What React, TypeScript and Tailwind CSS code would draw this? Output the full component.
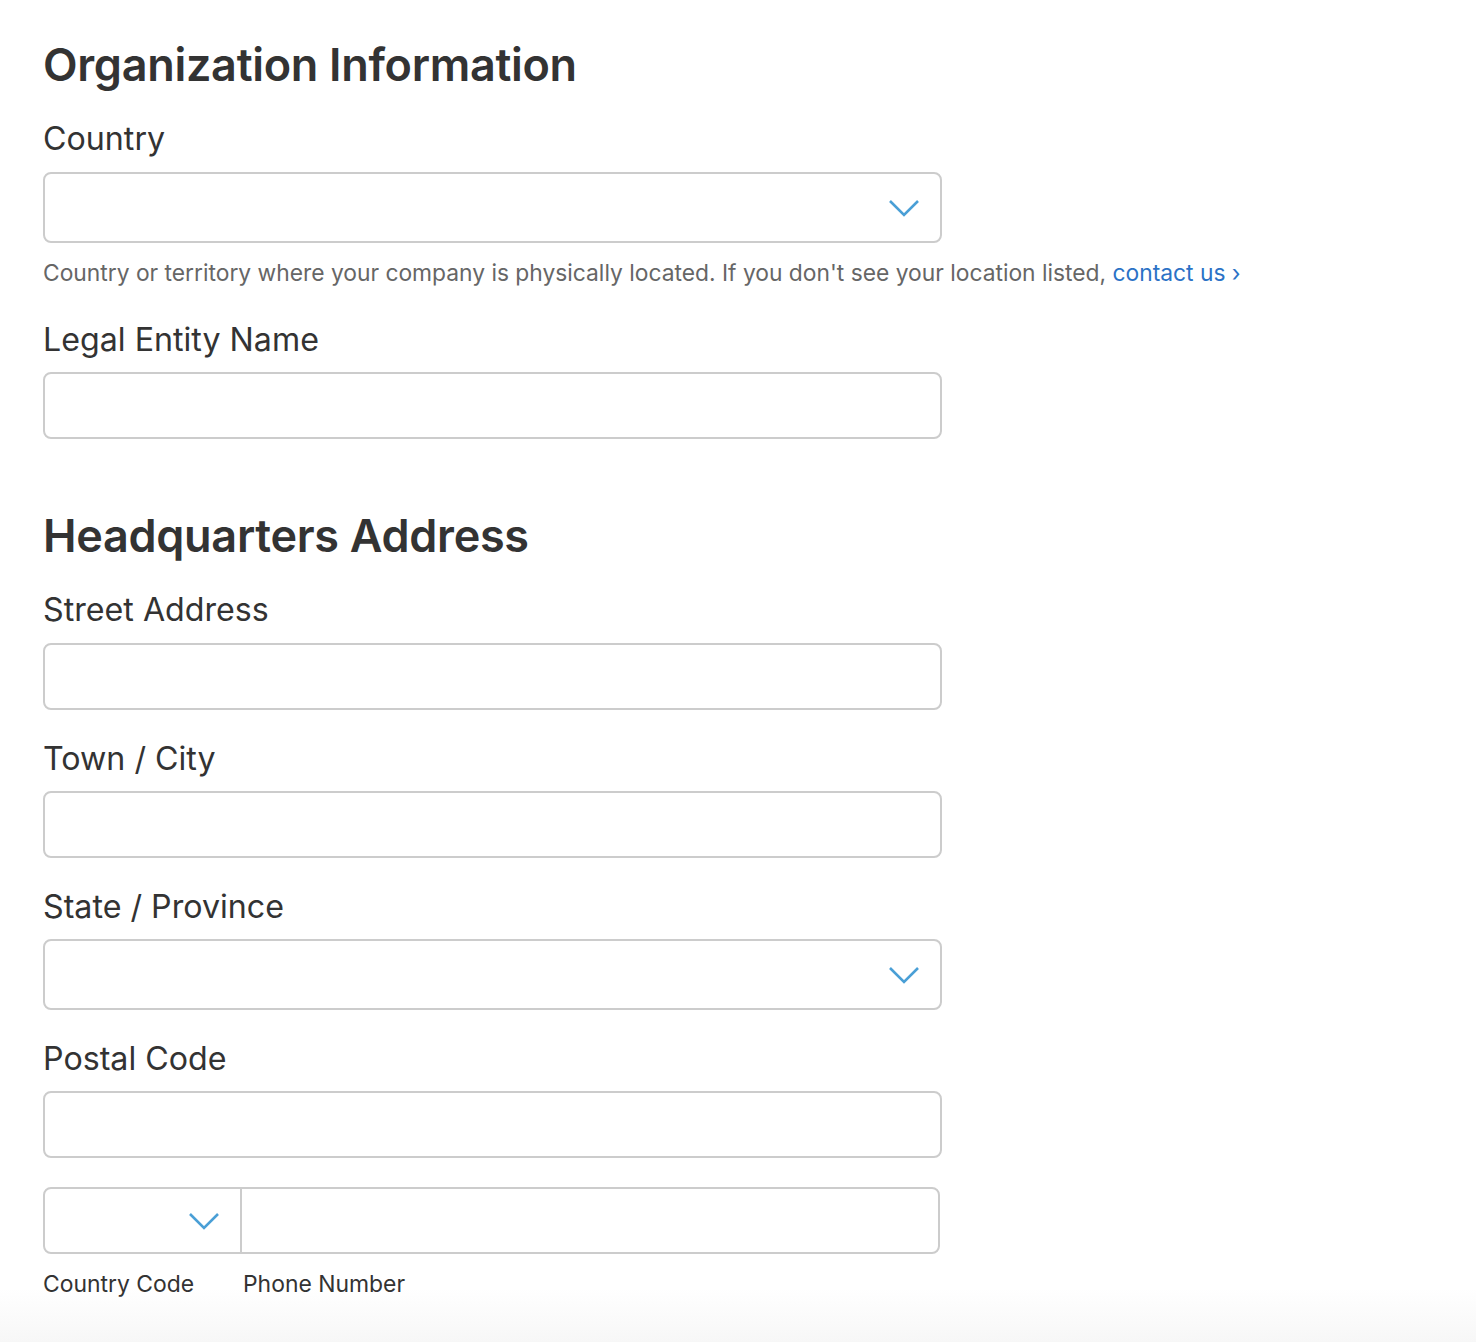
import React from "react";

const Chevron = ({ className = "" }: { className?: string }) => (
  <svg width="32" height="18" viewBox="0 0 32 18" className={className} fill="none">
    <path d="M2 2 L16 16 L30 2" stroke="#4a9fd6" strokeWidth="2.6" strokeLinecap="butt" strokeLinejoin="miter" />
  </svg>
);

const Label = ({ children }: { children: React.ReactNode }) => (
  <div className="h-[34px] flex items-center text-[32.2px] leading-none text-[#333333]">{children}</div>
);

const TextInput = () => (
  <div className="h-[67px] w-[899px] rounded-[8px] border-2 border-[#cccccc] bg-white" />
);

const Select = () => (
  <div className="h-[71px] w-[899px] rounded-[8px] border-2 border-[#cccccc] bg-white flex items-center justify-end pr-[20px]">
    <Chevron />
  </div>
);

export default function App() {
  return (
    <div
      className="w-[1476px] h-[1342px] bg-gradient-to-b from-white from-[96%] to-[#f7f7f7] text-[#333333]"
      style={{ fontFamily: "Inter, 'Noto Sans', sans-serif" }}
    >
      <div className="pl-[43px] pt-[40px]">
        <h1 className="h-[48px] flex items-center text-[45px] font-semibold leading-none tracking-[-0.3px]">Organization Information</h1>
        <div className="mt-[34px]"><Label>Country</Label></div>
        <div className="mt-[16px]"><Select /></div>
        <div className="mt-[17px] h-[26px] flex items-center text-[22.8px] leading-none text-[#666666]">
          Country or territory where your company is physically located. If you don't see your location listed,&nbsp;
          <span className="text-[#2b72c6]">contact us ›</span>
        </div>
        <div className="mt-[37px]"><Label>Legal Entity Name</Label></div>
        <div className="mt-[15px]"><TextInput /></div>

        <h2 className="mt-[72px] h-[48px] flex items-center text-[45px] font-semibold leading-none tracking-[-0.3px]">Headquarters Address</h2>
        <div className="mt-[34px]"><Label>Street Address</Label></div>
        <div className="mt-[16px]"><TextInput /></div>
        <div className="mt-[32px]"><Label>Town / City</Label></div>
        <div className="mt-[15px]"><TextInput /></div>
        <div className="mt-[32px]"><Label>State / Province</Label></div>
        <div className="mt-[15px]"><Select /></div>
        <div className="mt-[32px]"><Label>Postal Code</Label></div>
        <div className="mt-[15px]"><TextInput /></div>

        <div className="mt-[29px] h-[67px] w-[897px] rounded-[8px] border-2 border-[#cccccc] bg-white flex">
          <div className="w-[197px] border-r-2 border-[#cccccc] flex items-center justify-end pr-[20px]">
            <Chevron />
          </div>
          <div className="flex-1" />
        </div>
        <div className="mt-[17px] h-[26px] flex items-center text-[22.9px] leading-none text-[#333333]">
          <span className="w-[200px]">Country Code</span>
          <span>Phone Number</span>
        </div>
      </div>
    </div>
  );
}
